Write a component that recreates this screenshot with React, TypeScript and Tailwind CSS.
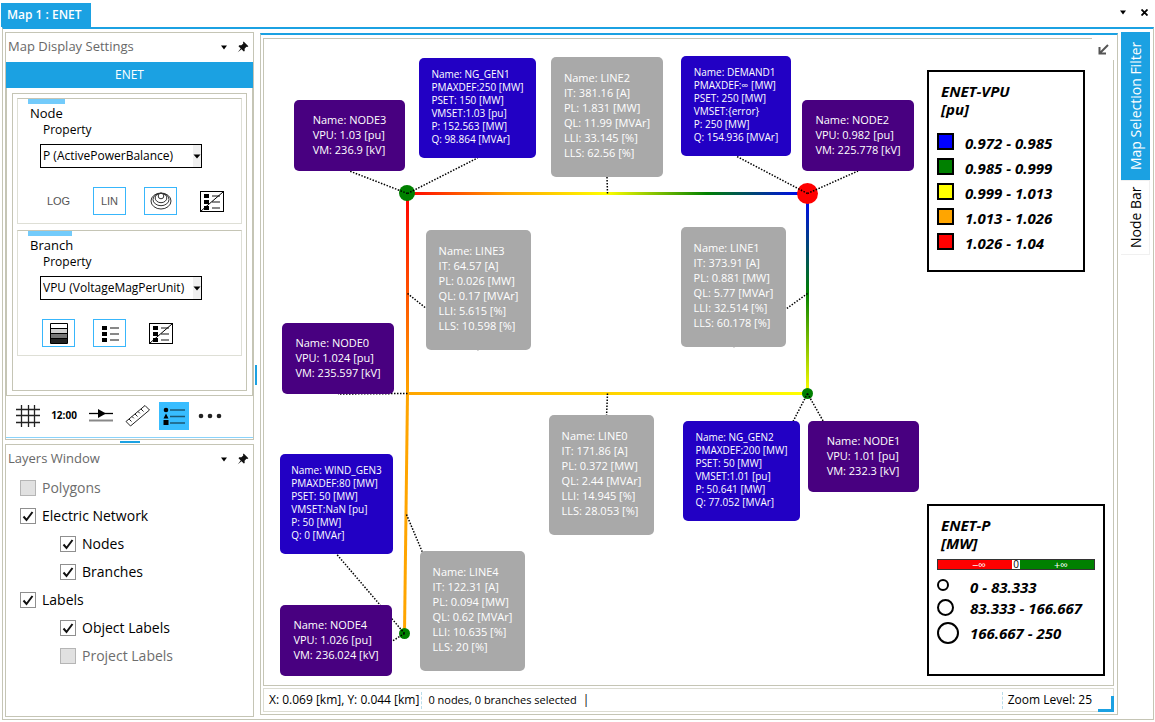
import React from 'react';

type Kind = 'bus' | 'branch' | 'device';

interface MapLabel {
    kind: Kind;
    x: number;
    y: number;
    width: number;
    anchor: [number, number];
    lines: string[];
}

const labelStyles: Record<Kind, { box: string; height: number }> = {
    bus: { box: 'bg-[#480080] text-[11px] leading-[15px] pb-[3px]', height: 71 },
    branch: { box: 'bg-[#a9a9a9] text-[11px] leading-[15px] pb-1', height: 120 },
    device: { box: 'bg-[#2200c4] text-[10px] leading-[13px] pb-[2px]', height: 100 },
};

const labels: MapLabel[] = [
    { kind: 'bus', x: 30, y: 61, width: 111, anchor: [143, 154], lines: ['Name: NODE3', 'VPU: 1.03 [pu]', 'VM: 236.9 [kV]'] },
    { kind: 'device', x: 155, y: 19, width: 117, anchor: [143, 154], lines: ['Name: NG_GEN1', 'PMAXDEF:250 [MW]', 'PSET: 150 [MW]', 'VMSET:1.03 [pu]', 'P: 152.563 [MW]', 'Q: 98.864 [MVAr]'] },
    { kind: 'branch', x: 287, y: 18, width: 112, anchor: [343, 154], lines: ['Name: LINE2', 'IT: 381.16 [A]', 'PL: 1.831 [MW]', 'QL: 11.99 [MVAr]', 'LLI: 33.145 [%]', 'LLS: 62.56 [%]'] },
    { kind: 'device', x: 417, y: 17, width: 110, anchor: [543, 154], lines: ['Name: DEMAND1', 'PMAXDEF:∞ [MW]', 'PSET: 250 [MW]', 'VMSET:{error}', 'P: 250 [MW]', 'Q: 154.936 [MVAr]'] },
    { kind: 'bus', x: 538, y: 61, width: 112, anchor: [543, 154], lines: ['Name: NODE2', 'VPU: 0.982 [pu]', 'VM: 225.778 [kV]'] },
    { kind: 'branch', x: 162, y: 191, width: 105, anchor: [143, 254], lines: ['Name: LINE3', 'IT: 64.57 [A]', 'PL: 0.026 [MW]', 'QL: 0.17 [MVAr]', 'LLI: 5.615 [%]', 'LLS: 10.598 [%]'] },
    { kind: 'branch', x: 417, y: 188, width: 105, anchor: [543, 254], lines: ['Name: LINE1', 'IT: 373.91 [A]', 'PL: 0.881 [MW]', 'QL: 5.77 [MVAr]', 'LLI: 32.514 [%]', 'LLS: 60.178 [%]'] },
    { kind: 'bus', x: 18, y: 284, width: 112, anchor: [143, 354], lines: ['Name: NODE0', 'VPU: 1.024 [pu]', 'VM: 235.597 [kV]'] },
    { kind: 'branch', x: 285, y: 376, width: 105, anchor: [343, 354], lines: ['Name: LINE0', 'IT: 171.86 [A]', 'PL: 0.372 [MW]', 'QL: 2.44 [MVAr]', 'LLI: 14.945 [%]', 'LLS: 28.053 [%]'] },
    { kind: 'device', x: 419, y: 382, width: 117, anchor: [543, 354], lines: ['Name: NG_GEN2', 'PMAXDEF:200 [MW]', 'PSET: 50 [MW]', 'VMSET:1.01 [pu]', 'P: 50.641 [MW]', 'Q: 77.052 [MVAr]'] },
    { kind: 'bus', x: 544, y: 382, width: 111, anchor: [543, 354], lines: ['Name: NODE1', 'VPU: 1.01 [pu]', 'VM: 232.3 [kV]'] },
    { kind: 'device', x: 16, y: 415, width: 113, anchor: [140, 594], lines: ['Name: WIND_GEN3', 'PMAXDEF:80 [MW]', 'PSET: 50 [MW]', 'VMSET:NaN [pu]', 'P: 50 [MW]', 'Q: 0 [MVAr]'] },
    { kind: 'branch', x: 156, y: 512, width: 105, anchor: [142, 475], lines: ['Name: LINE4', 'IT: 122.31 [A]', 'PL: 0.094 [MW]', 'QL: 0.62 [MVAr]', 'LLI: 10.635 [%]', 'LLS: 20 [%]'] },
    { kind: 'bus', x: 16, y: 566, width: 112, anchor: [140, 594], lines: ['Name: NODE4', 'VPU: 1.026 [pu]', 'VM: 236.024 [kV]'] },
];

const voltageRanges = [
    { color: 'bg-[#0000ff]', text: '0.972 - 0.985' },
    { color: 'bg-[#008000]', text: '0.985 - 0.999' },
    { color: 'bg-[#ffff00]', text: '0.999 - 1.013' },
    { color: 'bg-[#ffa500]', text: '1.013 - 1.026' },
    { color: 'bg-[#ff0000]', text: '1.026 - 1.04' },
];

const powerRanges = [
    { circle: 'size-3 border-2 mb-[5px]', row: 'h-[22px]', text: '0 - 83.333' },
    { circle: 'size-[17px] border-2 mb-[2px]', row: 'h-[20px]', text: '83.333 - 166.667' },
    { circle: 'size-[22px] border-2', row: 'h-[30px]', text: '166.667 - 250' },
];

const layers = [
    { name: 'Polygons', checked: false, child: false },
    { name: 'Electric Network', checked: true, child: false },
    { name: 'Nodes', checked: true, child: true },
    { name: 'Branches', checked: true, child: true },
    { name: 'Labels', checked: true, child: false },
    { name: 'Object Labels', checked: true, child: true },
    { name: 'Project Labels', checked: false, child: true },
];

const CaretIcon = () => (
    <svg width="6" height="5" viewBox="0 0 6 5"><path d="M0 0.5h6L3 4.5z" fill="#000" /></svg>
);

const PinIcon = () => (
    <svg width="12" height="12" viewBox="0 0 12 12">
        <path d="M6.6 0.6L11.4 5.2 10.2 5.9 9.4 5.7 7.6 7.8 7.7 9.9 6.8 10.6 4.5 8.3 0.8 11.2 3.7 7.4 1.5 5.2 2.2 4.3 4.4 4.3 6.3 2.6 6 1.5z" fill="#111" />
    </svg>
);

const LegendOffIcon = () => (
    <svg width="24" height="21" viewBox="0 0 24 21">
        <rect x="0.5" y="0.5" width="23" height="20" fill="none" stroke="#000" />
        <path d="M4 3h5v4H4zM4 9h5v4H4zM4 15h5v4H4z" fill="#000" />
        <path d="M12 5h8M12 11h8M12 17h8" stroke="#888" strokeWidth="2" />
        <path d="M1 20L23 1" stroke="#000" />
    </svg>
);

const LegendIcon = () => (
    <svg width="18" height="17" viewBox="0 0 18 17">
        <path d="M1 1h5v4H1zM1 7h5v4H1zM1 13h5v4H1z" fill="#000" />
        <path d="M9 3h9M9 9h9M9 15h9" stroke="#888" strokeWidth="2" />
    </svg>
);

const CirclesIcon = () => (
    <svg width="22" height="18" viewBox="0 0 22 18" fill="none" stroke="#333">
        <ellipse cx="11" cy="9" rx="10" ry="8" />
        <ellipse cx="11" cy="7.5" rx="8" ry="6.2" />
        <ellipse cx="11" cy="6" rx="5.8" ry="4.7" />
        <circle cx="11" cy="4" r="2.8" />
    </svg>
);

const GradientIcon = () => (
    <svg width="18" height="21" viewBox="0 0 18 21">
        <path d="M1 5h16v5H1z" fill="#d0d0d0" />
        <path d="M1 10h16v5H1z" fill="#777" />
        <path d="M1 15h16v5H1z" fill="#222" />
        <path d="M0.5 0.5h17v20H0.5zM1 5.5h16M1 10.5h16M1 15.5h16" fill="none" stroke="#000" />
    </svg>
);

interface PanelTitleProps {
    title: string;
}

const PanelTitle: React.FC<PanelTitleProps> = ({ title }) => (
    <div className="flex h-[29px] items-center pb-px pl-[2px] pr-1">
        <h2 className="flex-1 text-[13px] text-[#686868]">{title}</h2>
        <button aria-label={`${title} menu`} className="mr-[10px]"><CaretIcon /></button>
        <button aria-label={`Pin ${title}`}><PinIcon /></button>
    </div>
);

interface PropertyGroupProps {
    name: string;
    accent: string;
    value: string;
    children: React.ReactNode;
}

const PropertyGroup: React.FC<PropertyGroupProps> = ({ name, accent, value, children }) => (
    <fieldset className="border border-[#dedfd6] border-t-[#c5c5b5] pb-2">
        <div className={`ml-[10px] h-[5px] bg-[#73cbfb] ${accent}`} />
        <h3 className="ml-3 text-[13px] leading-[18px]">{name}</h3>
        <label className="block">
            <span className="ml-[25px] block text-[12px] leading-4">Property</span>
            <span className="relative ml-[22px] mt-[6px] block h-6 w-[162px]">
                <select className="block h-full w-full appearance-none border border-black bg-white pl-[2px] text-[12px]" defaultValue={value}>
                    <option>{value}</option>
                </select>
                <span className="pointer-events-none absolute inset-y-px right-px flex w-2 items-center bg-[#f0f0f0]">
                    <svg width="8" height="5" viewBox="0 0 8 5"><path d="M0.5 0.5h7L4 4.5z" fill="#000" /></svg>
                </span>
            </span>
        </label>
        <div className="ml-6 mt-[19px] flex gap-[18px]">{children}</div>
    </fieldset>
);

interface ToggleProps {
    label: string;
    active?: boolean;
    children: React.ReactNode;
}

const Toggle: React.FC<ToggleProps> = ({ label, active, children }) => (
    <button
        aria-label={label}
        className={`flex h-7 w-[33px] items-center justify-center border font-['Liberation_Sans'] text-[11px] text-[#555] ${active ? 'border-[#38b6fb]' : 'border-transparent'}`}
    >
        {children}
    </button>
);

const Toolbar = () => (
    <div className="flex h-[41px] items-center gap-[6px] pb-[2px] pl-[7px]">
        <button aria-label="Grid" className="flex w-[30px] justify-center">
            <svg width="24" height="22" viewBox="0 0 24 22" stroke="#222" strokeWidth="1.3">
                <path d="M0 4.5h24M0 10.5h24M0 17.5h24M5.5 0v22M12.5 0v22M18.5 0v22" />
            </svg>
        </button>
        <button className="flex w-[30px] justify-center text-[10px] font-bold">12:00</button>
        <button aria-label="Flow direction" className="flex w-8 justify-center">
            <svg width="24" height="14" viewBox="0 0 24 14">
                <path d="M0 4.5h24" stroke="#000" strokeWidth="1.3" />
                <path d="M9 0l8 4.5L9 9z" fill="#000" />
                <path d="M0 11.5h24" stroke="#888" strokeWidth="2" />
            </svg>
        </button>
        <button aria-label="Ruler" className="flex w-[30px] justify-center">
            <svg width="26" height="24" viewBox="0 0 26 24" fill="none" stroke="#222">
                <path d="M1 17.5L20 1.5l4.5 4.5L5.5 22z" />
                <path d="M4 15l2.5 2.5M7 12.5l1.8 1.8M10 10l2.5 2.5M13 7.5l1.8 1.8M16 5l2.5 2.5" />
            </svg>
        </button>
        <button aria-label="Legend" className="flex h-7 w-[30px] items-center justify-center bg-[#38bdff]">
            <svg width="24" height="18" viewBox="0 0 24 18">
                <circle cx="4" cy="3" r="2.3" fill="#000" />
                <path d="M1.5 11.5h5L4 6.5zM1.5 13h5v5h-5z" fill="#000" />
                <path d="M8 3h15M8 9.5h15M8 16h15" stroke="#1b5875" strokeWidth="1.5" />
            </svg>
        </button>
        <button aria-label="More" className="flex w-[30px] justify-center">
            <svg width="24" height="6" viewBox="0 0 24 6" fill="#222">
                <circle cx="3" cy="3" r="2.3" />
                <circle cx="12" cy="3" r="2.3" />
                <circle cx="21" cy="3" r="2.3" />
            </svg>
        </button>
    </div>
);

const LayerList = () => (
    <ul>
        {layers.map((layer) => (
            <li key={layer.name} className={layer.child ? 'pl-[54px]' : 'pl-[14px]'}>
                <label className={`flex h-7 items-center gap-[6px] pb-px text-[14px] ${layer.checked ? 'text-black' : 'text-[#6d6d6d]'}`}>
                    <span className="relative size-4">
                        <input
                            type="checkbox"
                            defaultChecked={layer.checked}
                            className="block size-4 appearance-none border border-[#b5b5b5] bg-[#e1e1e1] checked:border-[#8f8f8f] checked:bg-white"
                        />
                        {layer.checked && (
                            <svg className="pointer-events-none absolute inset-0" width="16" height="16" viewBox="0 0 16 16">
                                <path d="M3.5 8.5l3 3.5 6-8" fill="none" stroke="#111" strokeWidth="2" />
                            </svg>
                        )}
                    </span>
                    {layer.name}
                </label>
            </li>
        ))}
    </ul>
);

const Network = () => (
    <svg className="absolute left-0 top-0" width="849" height="646" viewBox="0 0 849 646">
        <defs>
            <linearGradient id="line2" gradientUnits="userSpaceOnUse" x1="143" y1="0" x2="543" y2="0">
                <stop offset="0" stopColor="#ff0000" />
                <stop offset="0.25" stopColor="#ffa500" />
                <stop offset="0.5" stopColor="#ffff00" />
                <stop offset="0.75" stopColor="#008000" />
                <stop offset="1" stopColor="#0000ff" />
            </linearGradient>
            <linearGradient id="line3" gradientUnits="userSpaceOnUse" x1="0" y1="154" x2="0" y2="354">
                <stop offset="0" stopColor="#ff0000" />
                <stop offset="1" stopColor="#ffa500" />
            </linearGradient>
            <linearGradient id="line1" gradientUnits="userSpaceOnUse" x1="0" y1="154" x2="0" y2="354">
                <stop offset="0" stopColor="#0000ff" />
                <stop offset="0.5" stopColor="#008000" />
                <stop offset="1" stopColor="#ffff00" />
            </linearGradient>
            <linearGradient id="line0" gradientUnits="userSpaceOnUse" x1="143" y1="0" x2="543" y2="0">
                <stop offset="0" stopColor="#ffa500" />
                <stop offset="1" stopColor="#ffff00" />
            </linearGradient>
        </defs>
        <g strokeWidth="3">
            <path d="M143 154.5H543" stroke="url(#line2)" />
            <path d="M143.5 154V354" stroke="url(#line3)" />
            <path d="M143.5 354L140.5 594" stroke="#ffa500" />
            <path d="M143 354.5H543" stroke="url(#line0)" />
            <path d="M543.5 154V354" stroke="url(#line1)" />
        </g>
        <circle cx="143" cy="154" r="8" fill="#008000" />
        <circle cx="543.5" cy="154.5" r="10.5" fill="#ff0000" />
        <circle cx="543.5" cy="354.5" r="5.5" fill="#008000" />
        <circle cx="140.5" cy="594.5" r="5.5" fill="#008000" />
        {labels.map((label) => (
            <line
                key={label.lines[0]}
                x1={label.anchor[0] + 0.5}
                y1={label.anchor[1] + 0.5}
                x2={label.x + label.width / 2}
                y2={label.y + labelStyles[label.kind].height}
                stroke="#000"
                strokeWidth="1.5"
                strokeDasharray="1.5 1.5"
            />
        ))}
    </svg>
);

const MapCanvas = () => (
    <div className="relative flex-1 overflow-clip border border-[#c5c5b5] [overflow-clip-margin:1px]">
        <Network />
        {labels.map((label) => (
            <div
                key={label.lines[0]}
                className={`absolute flex items-center justify-center whitespace-nowrap rounded-[5px] text-white ${labelStyles[label.kind].box}`}
                style={{ left: label.x, top: label.y, width: label.width, height: labelStyles[label.kind].height }}
            >
                <div>
                    {label.lines.map((line) => <p key={line}>{line}</p>)}
                </div>
            </div>
        ))}

        <button aria-label="Collapse" className="absolute -right-px -top-px flex size-[22px] items-center justify-center bg-white">
            <svg width="11" height="11" viewBox="0 0 11 11" fill="none" stroke="#555" strokeWidth="2">
                <path d="M10 1L2 9M1.5 3v6.500H8" />
            </svg>
        </button>

        <section className="absolute right-7 top-[31px] h-[202px] w-[158px] border-2 border-black bg-white pl-2 pt-[10px] text-[15px] font-bold italic">
            <h3 className="ml-1 leading-[18px]">ENET-VPU<br />[pu]</h3>
            <ul className="mt-[13px]">
                {voltageRanges.map((range) => (
                    <li key={range.text} className="flex h-[25px] items-center gap-[11px]">
                        <span className={`mb-[5px] size-[17px] border-2 border-black ${range.color}`} />
                        {range.text}
                    </li>
                ))}
            </ul>
        </section>

        <section className="absolute bottom-[9px] right-2 h-[172px] w-[178px] border-2 border-black bg-white px-2 pt-[10px] text-[15px] font-bold italic">
            <h3 className="ml-1 leading-[18px]">ENET-P<br />[MW]</h3>
            <div className="mt-[7px] flex h-[11px] items-center border border-[#333] text-center text-[11px] font-normal not-italic leading-[9px] text-white">
                <span className="h-full flex-1 bg-[#ff0000] pl-2">−∞</span>
                <span className="h-full w-2 bg-white text-[10px] text-black">0</span>
                <span className="h-full flex-1 bg-[#008000] pl-2">+∞</span>
            </div>
            <ul className="mt-[6px]">
                {powerRanges.map((range) => (
                    <li key={range.text} className={`flex items-center whitespace-nowrap ${range.row}`}>
                        <span className="w-[33px] shrink-0">
                            <span className={`block rounded-full border-black ${range.circle}`} />
                        </span>
                        {range.text}
                    </li>
                ))}
            </ul>
        </section>
    </div>
);

const StatusBar = () => (
    <footer className="relative mt-[2px] flex h-6 items-center border border-[#dcdcd2] pl-[5px] text-[12px]">
        <span>X: 0.069 [km], Y: 0.044 [km]</span>
        <span className="ml-[2px] h-[17px] border-l border-dashed border-[#b9dcea]" />
        <span className="ml-[6px] text-[11px]">0 nodes, 0 branches selected</span>
        <span className="ml-[6px] flex-1">|</span>
        <span className="h-[17px] border-l border-dashed border-[#b9dcea]" />
        <span className="ml-[5px] mr-[21px]">Zoom Level: 25</span>
        <span className="absolute -bottom-px -right-px size-4 border-b-[3px] border-r-[3px] border-[#1ba1e2] bg-white" />
    </footer>
);

export default function App() {
    return (
        <div className="flex h-screen flex-col bg-white pb-[2px] font-['Open_Sans','Noto_Sans',sans-serif] text-black">
            <header className="flex h-[27px] items-end pl-px">
                <button className="h-6 w-[90px] bg-[#1ba1e2] pl-[6px] text-left text-[12px] font-semibold text-white">Map 1 : ENET</button>
                <div className="flex-1" />
                <button aria-label="Window list" className="mb-3 mr-[15px]"><CaretIcon /></button>
                <button aria-label="Close" className="mb-[11px] mr-[7px]">
                    <svg width="7" height="7" viewBox="0 0 7 7" stroke="#000" strokeWidth="1.8"><path d="M0.5 0.5l6 6M6.5 0.5l-6 6" /></svg>
                </button>
            </header>

            <main className="ml-[2px] mr-px flex min-h-0 flex-1 border border-t-2 border-[#c5c5b5] border-t-[#1ba1e2] pb-[2px] pl-[2px] pr-[3px] pt-[3px]">
                <aside className="flex w-[249px] shrink-0 flex-col">
                    <section className="border border-[#c5c5b5]">
                        <PanelTitle title="Map Display Settings" />
                        <button className="block h-[26px] w-full bg-[#1ba1e2] text-[12px] text-white">ENET</button>
                        <div className="border border-t-0 border-[#c5c5b5] px-[5px] pb-1 pt-[5px]">
                            <div className="flex flex-col gap-[6px] border border-[#c5c5b5] px-1 pb-[34px] pt-1">
                                <PropertyGroup name="Node" accent="w-[37px]" value="P (ActivePowerBalance)">
                                    <Toggle label="Logarithmic">LOG</Toggle>
                                    <Toggle label="Linear" active>LIN</Toggle>
                                    <Toggle label="Node circles" active><CirclesIcon /></Toggle>
                                    <Toggle label="Node legend"><LegendOffIcon /></Toggle>
                                </PropertyGroup>
                                <PropertyGroup name="Branch" accent="w-11" value="VPU (VoltageMagPerUnit)">
                                    <Toggle label="Colour gradient" active><GradientIcon /></Toggle>
                                    <Toggle label="Branch legend" active><LegendIcon /></Toggle>
                                    <Toggle label="Hide legend"><LegendOffIcon /></Toggle>
                                </PropertyGroup>
                            </div>
                        </div>
                        <Toolbar />
                        <div className="mb-px h-px bg-[#8ad3fb]" />
                    </section>
                    <div className="mx-auto my-px h-[2px] w-5 shrink-0 bg-[#1ba1e2]" />
                    <section className="flex-1 border border-[#c5c5b5]">
                        <PanelTitle title="Layers Window" />
                        <LayerList />
                    </section>
                </aside>

                <div className="flex w-[6px] shrink-0 items-center">
                    <div className="ml-px h-5 w-[2px] bg-[#1ba1e2]" />
                </div>

                <section className="mb-[2px] mt-px flex min-w-0 flex-1 flex-col border border-t-2 border-[#c5c5b5] border-t-[#1ba1e2] pb-[2px] pl-[2px] pr-[3px] pt-[3px]">
                    <MapCanvas />
                    <StatusBar />
                </section>

                <nav className="ml-[3px] flex w-[29px] shrink-0 flex-col text-[14px]">
                    <button className="h-[148px] rotate-180 bg-[#1ba1e2] text-white [writing-mode:vertical-rl]">Map Selection Filter</button>
                    <button className="h-[75px] rotate-180 border border-r-0 border-[#f0f0f0] [writing-mode:vertical-rl]">Node Bar</button>
                </nav>
            </main>
        </div>
    );
}
